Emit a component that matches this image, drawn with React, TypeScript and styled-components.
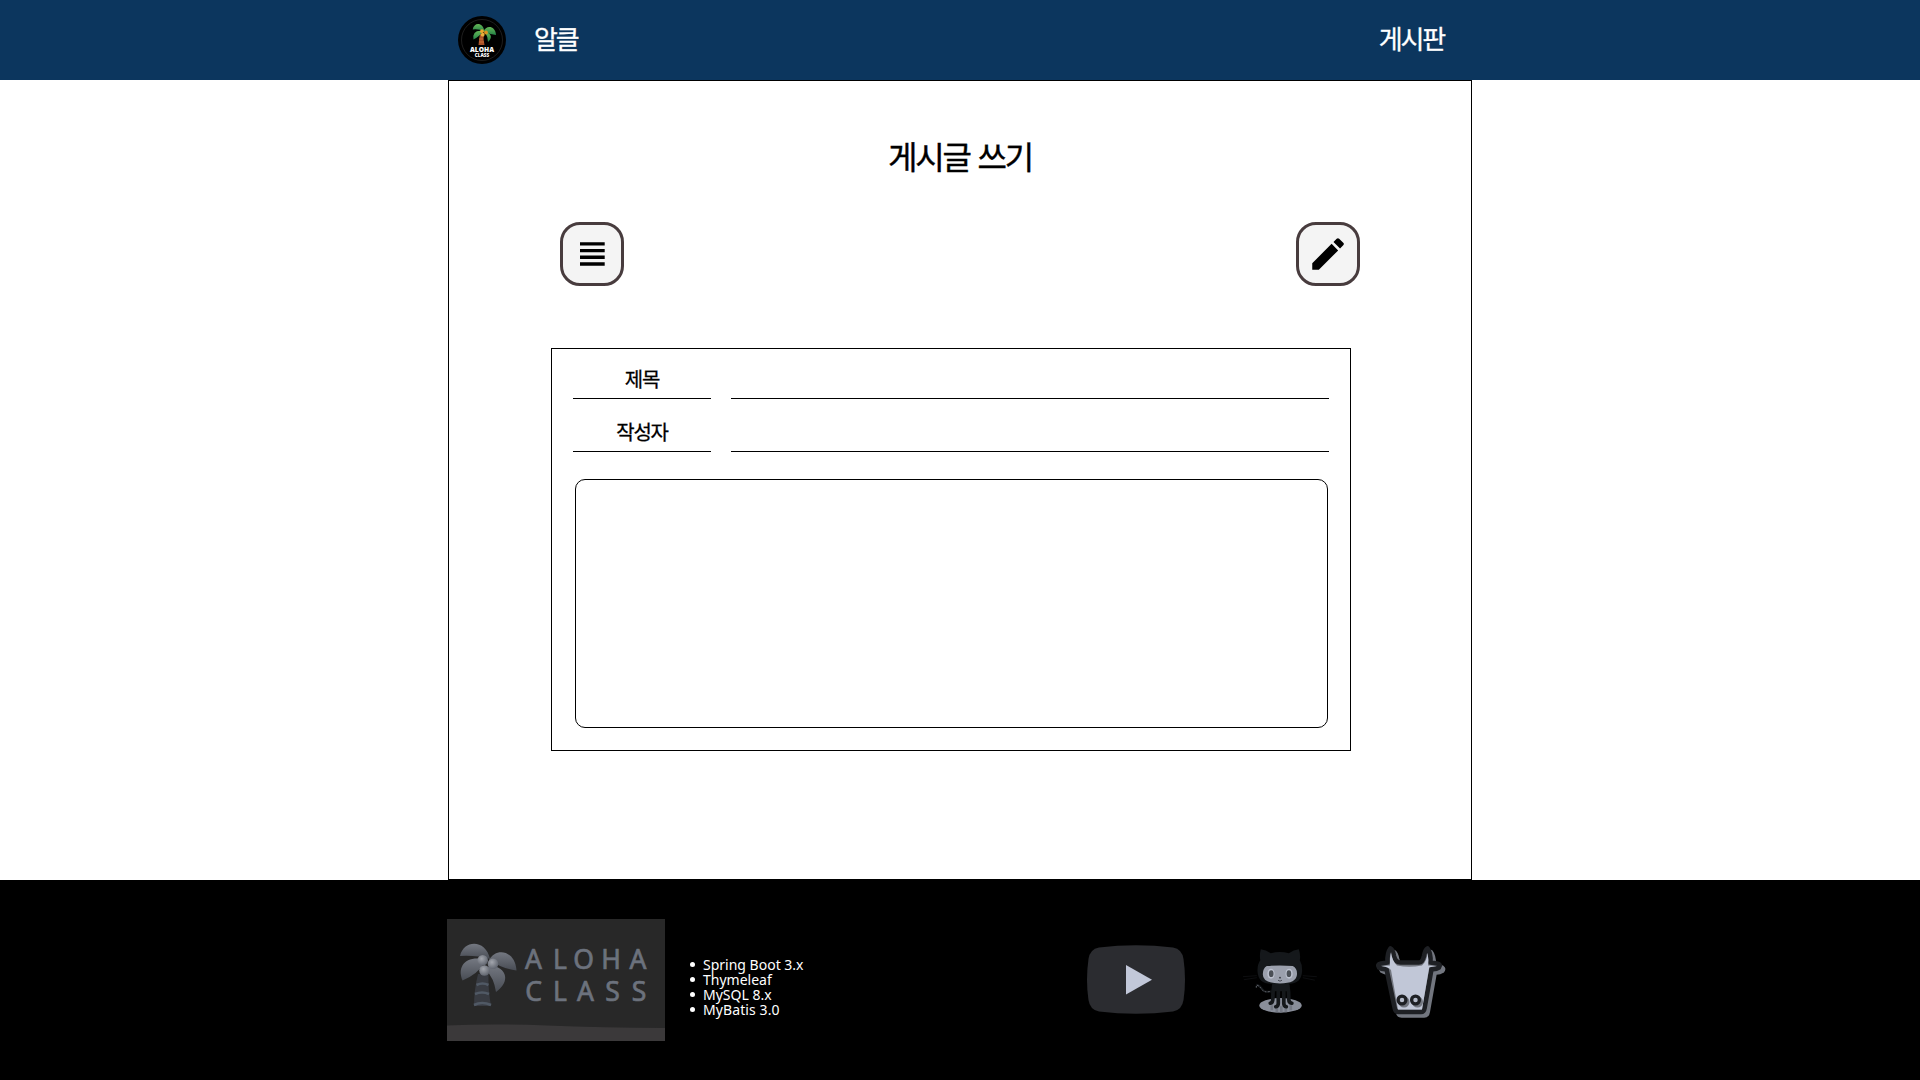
import React from 'react';
import styled, { createGlobalStyle } from 'styled-components';

const GlobalStyle = createGlobalStyle`
  * { box-sizing: border-box; }
  body { margin: 0; background: #fff; font-family: "Noto Sans CJK KR", sans-serif; color: #000; }
`;

const Page = styled.div`
  height: 1080px;
  display: flex;
  flex-direction: column;
  overflow: hidden;
`;

const Header = styled.header`
  height: 80px;
  background: #0c365e;
  display: flex;
  justify-content: center;
`;

const Nav = styled.nav`
  width: 1024px;
  display: flex;
  align-items: center;
  padding: 0 28px 0 10px;
`;

const NavLink = styled.a<{ $push?: boolean }>`
  color: #fff;
  font-size: 26px;
  line-height: 40px;
  letter-spacing: -2.2px;
  -webkit-text-stroke: 0.3px #fff;
  padding-bottom: 4px;
  margin-left: ${(p) => (p.$push ? 'auto' : '28px')};
`;

const Main = styled.main`
  width: 1024px;
  height: 800px;
  margin: 0 auto;
  border: 1px solid #000;
  padding-top: 50px;
  display: flex;
  flex-direction: column;
`;

const Title = styled.h1`
  margin: 0;
  text-align: center;
  font-size: 32px;
  font-weight: 400;
  line-height: 48px;
  letter-spacing: -2.2px;
  word-spacing: 3px;
  -webkit-text-stroke: 0.4px #000;
`;

const Toolbar = styled.div`
  display: flex;
  justify-content: space-between;
  padding: 0 111px;
  margin-top: 43px;
`;

const IconButton = styled.button`
  width: 64px;
  height: 64px;
  padding: 0;
  border: 3px solid #483c3e;
  border-radius: 20px;
  background: #f4f4f4;
  display: grid;
  place-items: center;
`;

const Form = styled.form`
  width: 800px;
  height: 403px;
  margin: 62px 0 0 102px;
  border: 1px solid #000;
  padding: 0 21px;
  display: flex;
  flex-direction: column;
`;

const Row = styled.div<{ $h: number }>`
  display: flex;
  gap: 20px;
  height: ${(p) => p.$h}px;
  align-items: flex-end;
`;

const Label = styled.label`
  width: 138px;
  height: 37px;
  border-bottom: 1px solid #000;
  text-align: center;
  font-size: 20px;
  font-weight: 400;
  line-height: 34px;
  letter-spacing: -1.2px;
  -webkit-text-stroke: 0.3px #000;
`;

const Input = styled.input`
  flex: 1;
  min-width: 0;
  height: 37px;
  border: 0;
  border-bottom: 1px solid #000;
  outline: none;
  background: transparent;
`;

const Content = styled.textarea`
  margin: 27px 2px 0;
  width: 753px;
  height: 249px;
  border: 1px solid #000;
  border-radius: 10px;
  resize: none;
  outline: none;
  background: transparent;
`;

const Footer = styled.footer`
  height: 200px;
  background: #000;
  display: flex;
  justify-content: center;
`;

const FooterInner = styled.div`
  width: 1026px;
  display: flex;
  align-items: center;
`;

const StackList = styled.ul`
  margin: 13px 0 0 20px;
  padding: 0;
  list-style: none;
  color: #fff;
  font-family: "Noto Sans", "Noto Sans CJK KR", sans-serif;
  font-size: 14px;
  line-height: 15px;
`;

const StackItem = styled.li<{ $spacing: number }>`
  display: flex;
  align-items: center;
  white-space: nowrap;
  letter-spacing: ${(p) => p.$spacing}px;
  &::before {
    content: '';
    width: 5px;
    height: 5px;
    border-radius: 50%;
    background: #fff;
    margin: 0 8px 0 5px;
  }
`;

const Socials = styled.div`
  margin: 0 27px 0 auto;
  display: flex;
  align-items: center;
`;

const Drawing = styled.svg<{ $ml?: number; $mb?: number }>`
  display: block;
  flex: none;
  margin-left: ${(p) => p.$ml ?? 0}px;
  margin-bottom: ${(p) => p.$mb ?? 0}px;
`;

function AlohaBadge() {
  return (
    <Drawing width="48" height="48" viewBox="0 0 48 48">
      <defs>
        <linearGradient id="leaf" x1="0" y1="0" x2="0" y2="1">
          <stop offset="0" stopColor="#65b657" />
          <stop offset="1" stopColor="#238247" />
        </linearGradient>
      </defs>
      <circle cx="24" cy="24" r="24" fill="#000" />
      <circle cx="24" cy="24" r="20.5" fill="none" stroke="#333" strokeWidth=".6" />
      <path d="M22 18h4l-.5 5 1 6h-6q.5-6 1.500-11Z" fill="#a85127" />
      <path d="M21.300 23h4M21 26h5" stroke="#d37a3d" strokeWidth=".8" />
      <g fill="url(#leaf)">
        <path d="M14.700 13.500C16 6 25 6 26.500 15.500Q20 12.500 14.700 13.500Z" />
        <path d="M25.500 15.500C28 8.500 37.500 9.500 38 19Q31 18 25.500 15.500Z" />
        <path d="M25 15Q14 13.500 15.500 23.500Q21 21 25 15Z" />
        <path d="M27 16C34 17 34.500 22.500 30 26Q30 21 27 16Z" />
      </g>
      <circle cx="24" cy="15.200" r="1.900" fill="#e9a82c" />
      <circle cx="28" cy="16.500" r="1.900" fill="#dc9420" />
      <circle cx="24.700" cy="18.700" r="1.900" fill="#eab13b" />
      <g fill="#fff" fontFamily="Open Sans, sans-serif" fontWeight="800" textAnchor="middle">
        <text x="24" y="36.200" fontSize="7.400" textLength="24" lengthAdjust="spacingAndGlyphs">ALOHA</text>
        <text x="24" y="41.200" fontSize="5.200" textLength="14.500" lengthAdjust="spacingAndGlyphs">CLASS</text>
      </g>
    </Drawing>
  );
}

function AlohaBanner() {
  return (
    <Drawing width="218" height="122" viewBox="0 0 218 122">
      <defs>
        <linearGradient id="frond" x1="0" y1="0" x2="0" y2="1">
          <stop offset="0" stopColor="#747881" />
          <stop offset="1" stopColor="#484c54" />
        </linearGradient>
        <radialGradient id="nut" cx=".4" cy=".35" r=".7">
          <stop offset="0" stopColor="#a3a6ad" />
          <stop offset="1" stopColor="#5c616b" />
        </radialGradient>
      </defs>
      <path d="M0 0h218v122H0Z" fill="#282828" />
      <path d="M0 106.500Q45 104.500 100 106.500T218 109v13H0Z" fill="#3b393a" />
      <path d="M31 55h10.500q-.5 15 2.500 32H27q0-16 4-32Z" fill="#383b42" />
      <path d="M29.500 66q6-3 12 0M28 75q7-3 14 0M27 86q8-4 17 0" fill="none" stroke="#505965" strokeWidth="2.600" />
      <g fill="url(#frond)">
        <path d="M13 37C17 20 39 20.500 43 40Q29 36 13 37Z" />
        <path d="M42 41C49 28 68 31 69.500 51.500Q56 50 42 41Z" />
        <path d="M36 40C17 37 10 49 15.500 61.500Q31 55 38 43Z" />
        <path d="M43 46C61 49 63 63 49 73Q47 59 39 51Z" />
      </g>
      <circle cx="35.700" cy="41.300" r="5.300" fill="url(#nut)" />
      <circle cx="46" cy="44.800" r="5.300" fill="url(#nut)" />
      <circle cx="37.500" cy="51.500" r="5.300" fill="url(#nut)" />
      <g
        fill="#6c727d"
        stroke="#6c727d"
        strokeWidth=".7"
        fontFamily="Noto Sans, sans-serif"
        fontSize="26.500"
        textAnchor="middle"
      >
        <text y="50.300" x="86.500 113 136.700 164 191">ALOHA</text>
        <text y="81.700" x="86.500 113 138.500 165.500 192">CLASS</text>
      </g>
    </Drawing>
  );
}

function YouTubeMark() {
  return (
    <Drawing width="98" height="69" viewBox="0 0 98 69" $mb={2}>
      <path d="M12 2.500Q49-2 86 2.500Q95 4 96.500 14Q99.500 35 96.500 55Q95 65 86 66.500Q49 71 12 66.500Q3 65 1.500 55Q-1.500 35 1.500 14Q3 4 12 2.500Z" fill="#2b2c30" />
      <path d="M39 20v29.500L65 34.700Z" fill="#c2c8d9" />
    </Drawing>
  );
}

function Octocat() {
  return (
    <Drawing $ml={58} width="76" height="70" viewBox="0 0 76 70">
      <g transform="translate(-1.200 .2)">
        <ellipse cx="38.700" cy="60.200" rx="21.200" ry="7.300" fill="#898e9a" />
        <path d="M30 60v5M35 61v6M39.500 61v6M44 61v6M49 60v5" stroke="#737883" strokeWidth="2.600" />
        <path d="M32 40Q31 46 31 54Q31 57.500 28.500 58M36.500 41v17Q36.500 61 34 61.500M42 41v17Q42 61 44.500 61.500M46 40Q47 46 47 54Q47 57.500 50 58" fill="none" stroke="#15181b" strokeWidth="3.700" strokeLinecap="round" />
        <path d="M31 37h16l.5 9h-17Z" fill="#15181b" />
        <path d="M30 46Q23 48 20.500 44Q18 40 14.500 39.500" fill="none" stroke="#15181b" strokeWidth="2" />
        <path d="M14.500 42.500v-2.500Q17 40 19.500 43.500Q22 48 29 46" fill="none" stroke="#7a7e87" strokeWidth=".8" strokeDasharray="1.800 1.500" />
        <path d="M19 4Q24 4.500 29 8Q38 5.500 47 8Q52 4.500 57 4Q59 10 58 15Q60.500 19 60.300 26Q59.500 38.500 47 38.500H29Q16.500 38.500 15.700 26Q15.500 19 18.500 15Q17.500 10 19 4Z" fill="#15181b" />
        <path d="M25 20.800Q38 19.800 51 20.800Q55.500 23 55.200 29Q55 38.200 38 38.200Q21 38.200 21 29Q21 23 25 20.800Z" fill="#9ba0ad" />
        <ellipse cx="29.200" cy="28.500" rx="3.600" ry="5" fill="#bcc1cf" />
        <ellipse cx="47.300" cy="28.500" rx="3.600" ry="5" fill="#bcc1cf" />
        <ellipse cx="29.400" cy="28.500" rx="2.300" ry="3.400" fill="#4b5057" />
        <ellipse cx="47.100" cy="28.500" rx="2.300" ry="3.400" fill="#4b5057" />
        <circle cx="38.200" cy="32.500" r=".9" fill="#33363d" />
        <path d="M36.200 35q2 2 4 0" fill="none" stroke="#33363d" strokeWidth=".8" />
        <path d="M1 31.500l14-1M2 34.500l13-2M61 30.500l14 1M61 32.500l12 2.500" stroke="#101214" strokeWidth=".8" />
      </g>
    </Drawing>
  );
}

const cowPath =
  'M30.500 18.500Q33 20 34 26Q35.500 32.500 40.500 32.500H59Q62.500 32.500 64 26Q65 20 67.500 18.500Q71 23 70.500 32.500L77 33.500Q81.500 34.500 79 37.500Q76 39.500 71.500 39L64.500 78.500Q64 82 61 82H38.500Q35.500 82 34.800 78.500L26.500 39Q22 39.500 19 37.500Q16.500 34.500 21 33.500L27.500 32.500Q27 23 30.500 18.500Z';

function CowMark() {
  return (
    <Drawing $ml={53} width="74" height="76" viewBox="12 12 74 76">
      <g strokeLinejoin="round">
        <path d={cowPath} transform="translate(3.200 3.500)" fill="#72767f" stroke="#72767f" strokeWidth="4.500" />
        <path d={cowPath} fill="#72767f" stroke="#1e2024" strokeWidth="4.600" />
        <path d="M31 22Q32 31 37 35.500Q49 38 62 35.500Q67 31 67.500 23Q69 30 68 35.500L76 36Q70 37.500 69.300 37L62 79.500H38L31 40Q29 37.500 22 36L30 35.500Q29.500 29 31 22Z" fill="#c1c7d7" />
        <circle cx="44" cy="72" r="5.500" fill="#72767f" />
        <circle cx="57.500" cy="72" r="5.500" fill="#72767f" />
        <circle cx="42" cy="70" r="3.900" fill="#b4bac8" stroke="#1e2024" strokeWidth="3.300" />
        <circle cx="55.500" cy="70" r="3.900" fill="#b4bac8" stroke="#1e2024" strokeWidth="3.300" />
      </g>
    </Drawing>
  );
}

const stack = [
  { name: 'Spring Boot 3.x', spacing: 0 },
  { name: 'Thymeleaf', spacing: 0 },
  { name: 'MySQL 8.x', spacing: 0 },
  { name: 'MyBatis 3.0', spacing: 0.1 },
];

export default function App() {
  return (
    <Page>
      <GlobalStyle />
      <Header>
        <Nav>
          <AlohaBadge />
          <NavLink>알클</NavLink>
          <NavLink $push>게시판</NavLink>
        </Nav>
      </Header>
      <Main>
        <Title>게시글 쓰기</Title>
        <Toolbar>
          <IconButton type="button" aria-label="목록">
            <Drawing width="26" height="26" viewBox="0 0 26 26">
              <path d="M1 1.200h24.700v3.400H1ZM1 7.900h24.700v3.400H1ZM1 14.600h24.700v3.400H1ZM1 21.300h24.700v3.400H1Z" />
            </Drawing>
          </IconButton>
          <IconButton type="button" aria-label="쓰기">
            <Drawing width="42" height="42" viewBox="0 0 24 24">
              <path d="M3 17.250V21h3.750L17.810 9.940l-3.750-3.750L3 17.250zM20.710 7.040a.996.996 0 0 0 0-1.410l-2.340-2.340a.996.996 0 0 0-1.410 0l-1.830 1.830 3.750 3.750 1.830-1.830z" />
            </Drawing>
          </IconButton>
        </Toolbar>
        <Form>
          <Row $h={50}>
            <Label htmlFor="title">제목</Label>
            <Input id="title" />
          </Row>
          <Row $h={53}>
            <Label htmlFor="writer">작성자</Label>
            <Input id="writer" />
          </Row>
          <Content />
        </Form>
      </Main>
      <Footer>
        <FooterInner>
          <AlohaBanner />
          <StackList>
            {stack.map((s) => (
              <StackItem key={s.name} $spacing={s.spacing}>
                {s.name}
              </StackItem>
            ))}
          </StackList>
          <Socials>
            <YouTubeMark />
            <Octocat />
            <CowMark />
          </Socials>
        </FooterInner>
      </Footer>
    </Page>
  );
}
